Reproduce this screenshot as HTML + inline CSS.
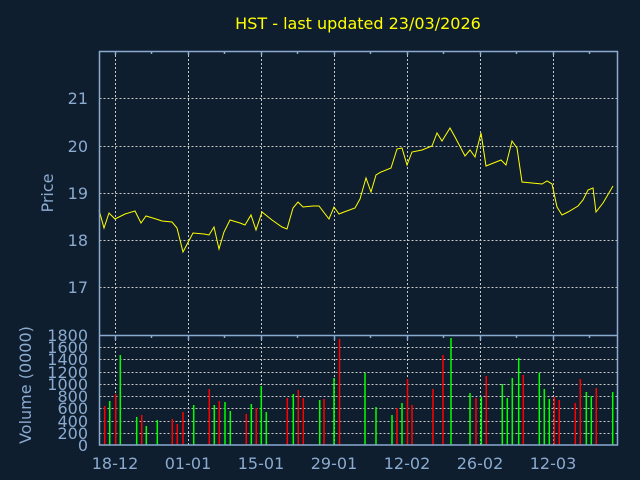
<!DOCTYPE html>
<html><head><style>
html,body{margin:0;padding:0;background:#0f1e2e;}
svg{display:block}
text{font-family:"DejaVu Sans",sans-serif;fill:#8aaad0;font-size:16px}
</style></head><body>
<svg width="640" height="480" viewBox="0 0 640 480">
<rect width="640" height="480" fill="#0f1e2e"/>
<text x="358" y="29" text-anchor="middle" style="fill:#ffff00;font-size:16px">HST - last updated 23/03/2026</text>
<g stroke="#c8c8c8" stroke-width="1" stroke-dasharray="2,2" fill="none">
<path d="M99.5 98.5H617M99.5 146.5H617M99.5 193.5H617M99.5 240.5H617M99.5 287.5H617"/>
<path d="M115.5 51V445M188.5 51V445M261.5 51V445M334.5 51V445M407.5 51V445M480.5 51V445M553.5 51V445"/>
<path d="M99.5 347.5H617M99.5 359.5H617M99.5 372.5H617M99.5 384.5H617M99.5 396.5H617M99.5 408.5H617M99.5 421.5H617M99.5 433.5H617"/>
</g>
<g stroke-width="1.5">
<g stroke="#ff0000">
<path d="M104.7 445V406M115.7 445V394M141.7 445V415M172.3 445V419M177.3 445V424M183 445V412M209.3 445V389M219.3 445V401M246.3 445V414M256.3 445V408M287.3 445V398M298.3 445V390M303.3 445V398M324 445V399M339.5 445V339M397 445V408M407.5 445V379M412 445V405M433 445V389M443 445V355M476 445V398M486.3 445V376M523.3 445V375M554.3 445V397M559.3 445V400M575.3 445V403M580.3 445V379M596.3 445V388"/>
</g>
<g stroke="#00ff00">
<path d="M109.7 445V401M120.3 445V355M136.7 445V417M146.3 445V426M157.3 445V420M193.7 445V405M214.3 445V405M225 445V402M230.3 445V411M251.3 445V404M261.3 445V386M266.3 445V412M293.3 445V394M319.7 445V400M334 445V378M365 445V373M376 445V407M392 445V415M402 445V403M451 445V338M470 445V393M481.3 445V397M502.3 445V384M507.3 445V398M512.3 445V378M518.7 445V358M539.3 445V373M544.3 445V389M549.3 445V399M586.3 445V392M591.3 445V396M612.7 445V392"/>
</g>
</g>
<polyline fill="none" stroke="#ffff00" stroke-width="1" points="99,210 104,228 109,213 115,219 125,214 135,211 141,223 146,216 156,219 162,221 172,222 177,228 183,252 193,233 204,234 209,235 214,227 219,249 224,232 230,220 240,223 245,225 251,215 256,230 262,212 272,220 282,227 287,229 293,208 298,202 303,207 313,206 319,206 329,219 334,207 339,214 344,212 355,208 360,199 366,178 371,192 376,175 381,172 391,168 397,149 402,148 407,165 412,152 422,150 432,146 437,133 442,141 450,128 455,137 465,156 470,150 475,157 481,133 486,166 496,162 501,160 506,165 512,141 517,148 522,182 532,183 542,184 547,181 552,184 557,207 562,215 568,212 578,206 583,200 588,190 593,188 596,212 603,203 613,186"/>
<g stroke="#8aaad0" stroke-width="1.5" fill="none">
<rect x="99.5" y="51.5" width="518" height="393.5"/>
<path d="M99.5 335.5H617"/>
<path d="M115.5 335V340M151.5 335V338M188.5 335V340M224.5 335V338M261.5 335V340M297.5 335V338M334.5 335V340M370.5 335V338M407.5 335V340M443.5 335V338M480.5 335V340M516.5 335V338M553.5 335V340M589.5 335V338"/>
<path d="M115.5 51V55M151.5 51V54M188.5 51V55M224.5 51V54M261.5 51V55M297.5 51V54M334.5 51V55M370.5 51V54M407.5 51V55M443.5 51V54M480.5 51V55M516.5 51V54M553.5 51V55M589.5 51V54"/>
</g>
<g text-anchor="end">
<text x="88" y="104">21</text><text x="88" y="152">20</text><text x="88" y="199">19</text><text x="88" y="246">18</text><text x="88" y="293">17</text>
<text x="88" y="341">1800</text><text x="88" y="353">1600</text><text x="88" y="365">1400</text><text x="88" y="378">1200</text><text x="88" y="390">1000</text><text x="88" y="402">800</text><text x="88" y="414">600</text><text x="88" y="427">400</text><text x="88" y="439">200</text><text x="88" y="451">0</text>
</g>
<g text-anchor="middle">
<text x="115" y="469">18-12</text><text x="188" y="469">01-01</text><text x="261" y="469">15-01</text><text x="334" y="469">29-01</text><text x="407" y="469">12-02</text><text x="480" y="469">26-02</text><text x="553" y="469">12-03</text>
</g>
<text transform="translate(53,193) rotate(-90)" text-anchor="middle">Price</text>
<text transform="translate(31,385) rotate(-90)" text-anchor="middle">Volume (0000)</text>
</svg>
</body></html>
